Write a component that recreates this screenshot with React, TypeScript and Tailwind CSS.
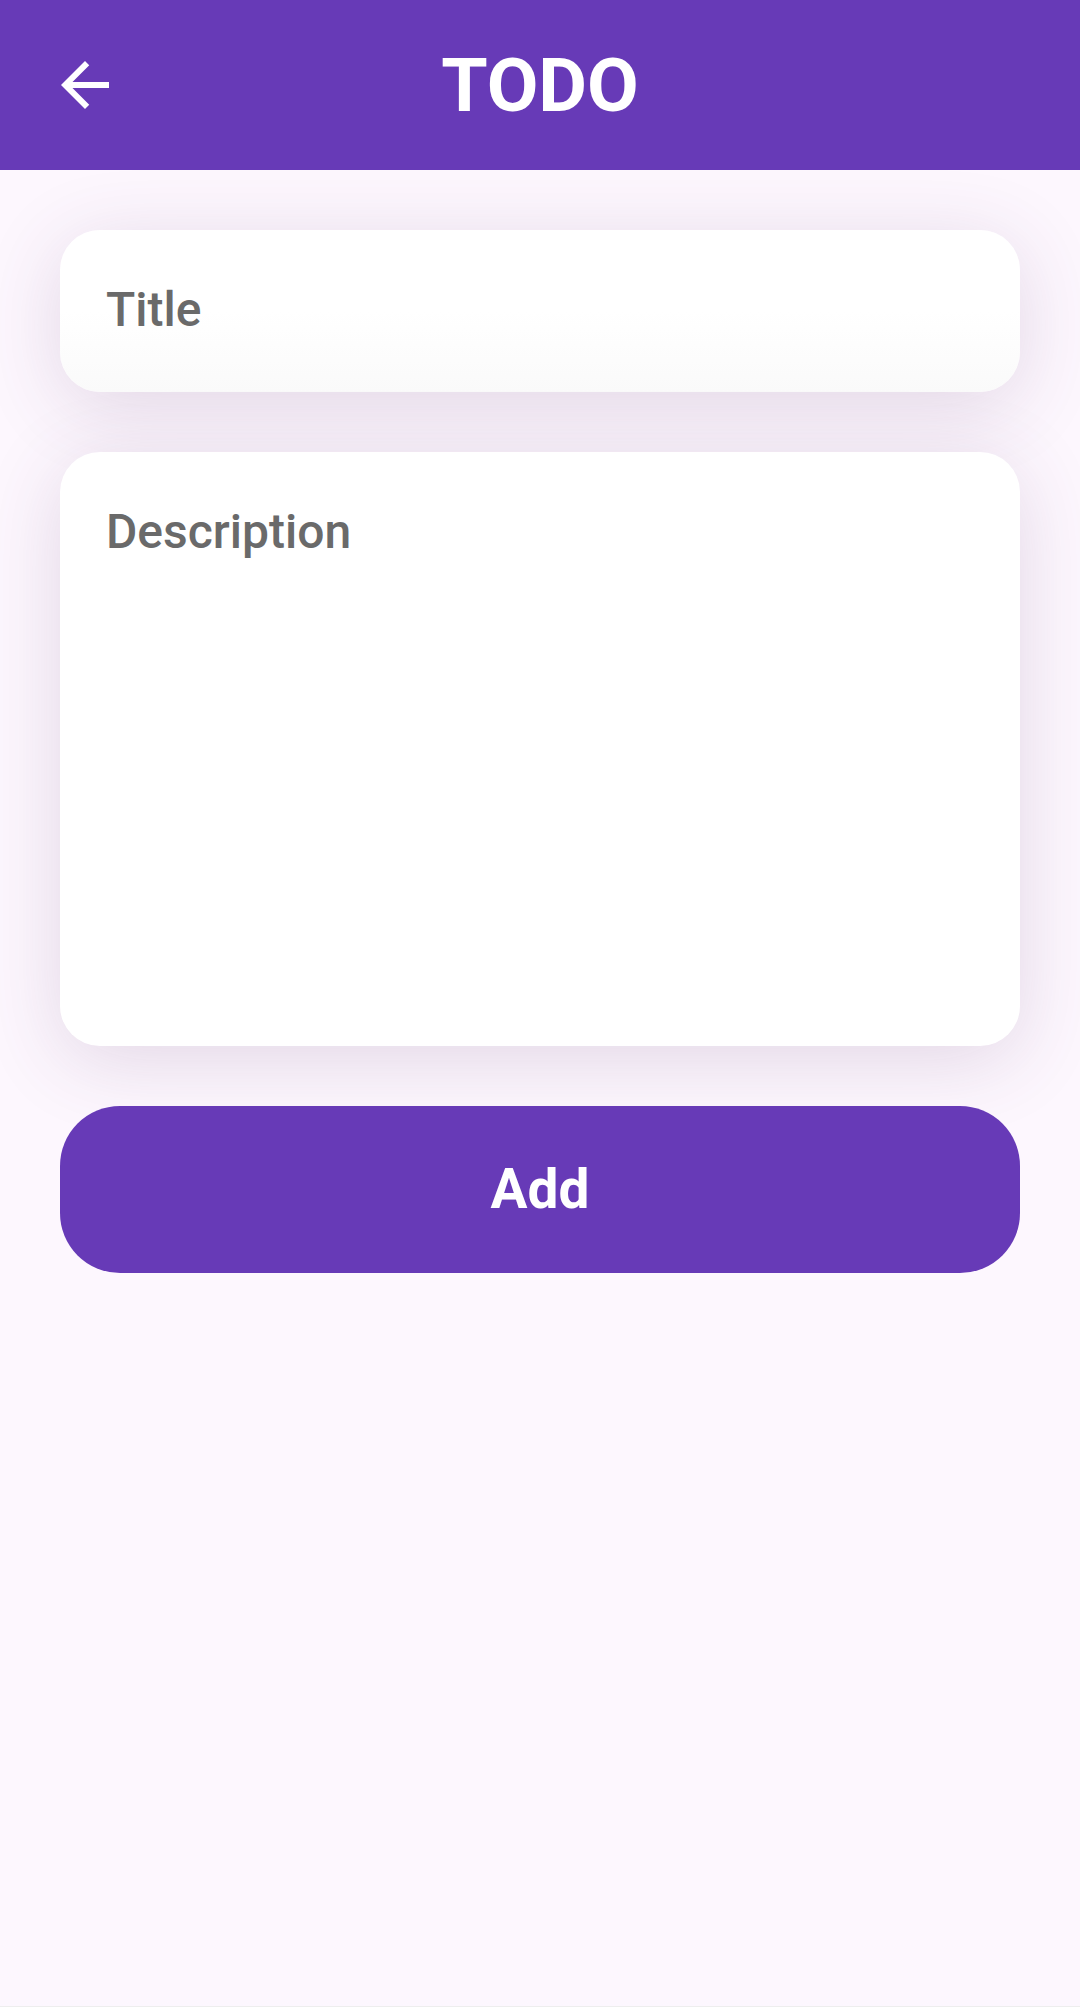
import React, { useState } from 'react';

const font = { fontFamily: 'Roboto, "Noto Sans", sans-serif' };

const BackArrow: React.FC = () => (
  <svg viewBox="0 0 24 24" className="w-[72px] h-[72px]" fill="#ffffff">
    <path d="M20 11H7.83l5.59-5.59L12 4l-8 8 8 8 1.41-1.41L7.83 13H20v-2z" />
  </svg>
);

const App: React.FC = () => {
  const [title, setTitle] = useState('');
  const [description, setDescription] = useState('');

  return (
    <div className="min-h-[2007px] flex flex-col bg-[#fdf7fe]" style={font}>
      {/* App bar */}
      <header className="relative h-[170px] bg-[#673ab7] flex items-center justify-center">
        <button className="absolute left-[49px] top-[49px]">
          <BackArrow />
        </button>
        <h1 className="text-[75px] font-bold text-white leading-none">TODO</h1>
      </header>

      {/* Form */}
      <main className="flex-1 flex flex-col px-[60px] pt-[60px]">
        <div className="h-[162px] rounded-[40px] bg-gradient-to-b from-white from-50% to-[#fafafa] shadow-[0_14px_80px_rgba(90,50,100,0.16)] px-[46px] pt-[51px]">
          <input
            value={title}
            onChange={e => setTitle(e.target.value)}
            placeholder="Title"
            className="w-full bg-transparent outline-none text-[48px] font-medium leading-none text-[#6a6a6a] placeholder:text-[#6a6a6a]"
          />
        </div>

        <div className="mt-[60px] h-[594px] rounded-[40px] bg-white shadow-[0_14px_80px_rgba(90,50,100,0.16)] px-[46px] pt-[51px]">
          <textarea
            value={description}
            onChange={e => setDescription(e.target.value)}
            placeholder="Description"
            className="w-full h-full resize-none bg-transparent outline-none text-[48px] font-medium leading-[1.2] text-[#6a6a6a] placeholder:text-[#6a6a6a]"
          />
        </div>

        <button className="mt-[60px] h-[167px] rounded-[60px] bg-[#673ab7] text-white text-[55px] font-bold">
          Add
        </button>
      </main>

      <div className="h-px bg-[#eeeeee]" />
    </div>
  );
};

export default App;
